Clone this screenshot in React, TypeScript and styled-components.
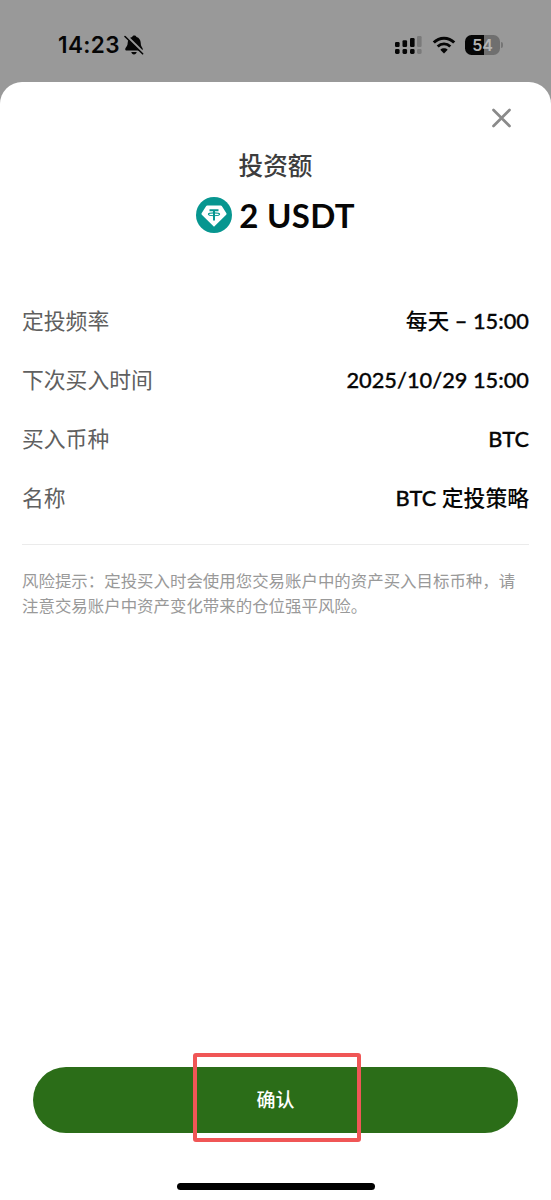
import React from "react";
import styled, { createGlobalStyle } from "styled-components";

const GlobalStyle = createGlobalStyle`
  * { box-sizing: border-box; }
  html, body { margin: 0; padding: 0; background: #999999; }
  body { font-family: Lato, "Noto Sans CJK SC", sans-serif; }
`;

const Screen = styled.div`
  width: 551px;
  height: 1200px;
  display: flex;
  flex-direction: column;
  background: #999999;
  overflow: hidden;
`;

const StatusBar = styled.header`
  height: 82px;
  flex: none;
  display: flex;
  align-items: flex-start;
  justify-content: space-between;
  padding: 31px 48px 0 58px;
`;

const StatusGroup = styled.div<{ $gap: number }>`
  display: flex;
  align-items: center;
  height: 28px;
  gap: ${(p) => p.$gap}px;
`;

const Clock = styled.span`
  font: 600 22.5px/28px Inter, sans-serif;
  letter-spacing: 0.4px;
  color: #060606;
  width: 61px;
  white-space: nowrap;
`;

const Battery = styled.div`
  display: flex;
  align-items: center;
  gap: 1px;
`;

const BatteryBody = styled.div`
  width: 35px;
  height: 20px;
  border-radius: 6.5px;
  background: linear-gradient(90deg, #060606 0 19px, #6f6f6f 19px);
  color: #b4b4b4;
  font: 600 16px/20px Inter, sans-serif;
  text-align: center;
`;

const BatteryTip = styled.div`
  width: 2px;
  height: 6px;
  border-radius: 0 2px 2px 0;
  background: #757575;
`;

const Sheet = styled.main`
  flex: 1;
  display: flex;
  flex-direction: column;
  background: #ffffff;
  border-radius: 22px 22px 0 0;
`;

const CloseRow = styled.div`
  display: flex;
  justify-content: flex-end;
  padding: 26px 39px 0 0;
  height: 65px;
`;

const CloseButton = styled.button`
  width: 21px;
  height: 21px;
  padding: 0;
  border: 0;
  background: none;
`;

const Title = styled.h1`
  margin: 0;
  text-align: center;
  font-size: 24.6px;
  line-height: 38px;
  font-weight: 500;
  color: #3d3d3d;
`;

const AmountRow = styled.div`
  display: flex;
  justify-content: center;
  align-items: center;
  gap: 7px;
  height: 40px;
  margin-top: 10px;
`;

const Amount = styled.span`
  font-size: 33px;
  line-height: 40px;
  font-weight: 700;
  letter-spacing: 0.3px;
  color: #060606;
  white-space: nowrap;
`;

const Details = styled.dl`
  margin: 56px 22px 0;
  padding-bottom: 17px;
  border-bottom: 1px solid #ebebeb;
`;

const DetailRow = styled.div`
  height: 59px;
  display: flex;
  justify-content: space-between;
  align-items: center;
`;

const Label = styled.dt`
  font-size: 21.8px;
  line-height: 32px;
  color: #606060;
`;

const Value = styled.dd`
  margin: 0;
  font-size: 21.8px;
  line-height: 32px;
  font-weight: 500;
  color: #060606;
`;

const Latin = styled.span`
  -webkit-text-stroke: 0.3px #060606;
`;

const RiskNote = styled.p`
  margin: 24px 22px 0;
  font-size: 16.45px;
  line-height: 25px;
  color: #999999;
  white-space: nowrap;
`;

const Footer = styled.footer`
  margin-top: auto;
  padding: 0 33px 10px;
  display: flex;
  flex-direction: column;
  align-items: center;
`;

const ConfirmButton = styled.button`
  position: relative;
  width: 485px;
  height: 66px;
  border: 0;
  border-radius: 33px;
  background: #2b6d18;
  color: #ffffff;
  font: 500 19px/28px Lato, "Noto Sans CJK SC", sans-serif;
`;

const Highlight = styled.span`
  position: absolute;
  left: 160px;
  top: -14px;
  width: 168px;
  height: 89px;
  border: 4.5px solid #f05656;
  border-radius: 3px;
`;

const HomeIndicator = styled.div`
  width: 198px;
  height: 7px;
  margin-top: 50px;
  border-radius: 4px;
  background: #000000;
`;

const MutedBell = () => (
  <svg width="20" height="20" viewBox="0 0 20 20">
    <path d="M10.300.6c1.200 0 2 .6 2.200 1.500 2.700.8 4.100 3 4.200 5.600.1 3 .9 4 1.700 5.200.9 1.400.3 2.700-1.300 2.700H2.900c-1.600 0-2.200-1.300-1.300-2.700.8-1.200 2-2.200 2.100-5.200.1-2.600 1.600-4.800 4.400-5.600C8.300 1.200 9.100.6 10.300.6zM7.300 17h5.400c-.3 1.600-1.300 2.400-2.700 2.400S7.600 18.600 7.300 17z" fill="#060606" />
    <path d="M2.400 1 19.400 17.700" stroke="#999999" strokeWidth="2.600" />
    <path d="M1 1.500 18.600 18.800" stroke="#060606" strokeWidth="1.600" strokeLinecap="round" />
  </svg>
);

const Signal = () => (
  <svg width="29" height="20" viewBox="0 0 29 20">
    <g fill="#060606">
      <rect x="1" y="7" width="4.600" height="5" rx="1.200" />
      <rect x="8.500" y="5.300" width="4.600" height="6.700" rx="1.200" />
      <rect x="16" y="3" width="4.600" height="9" rx="1.200" />
      <rect x="1" y="14" width="4.600" height="5" rx="1.400" />
      <rect x="8.500" y="14" width="4.600" height="5" rx="1.400" />
      <rect x="16" y="14" width="4.600" height="5" rx="1.400" />
    </g>
    <g fill="#7a7a7a">
      <rect x="23" y="1" width="4.600" height="11" rx="1.200" />
      <rect x="23" y="14" width="4.600" height="5" rx="1.400" />
    </g>
  </svg>
);

const Wifi = () => (
  <svg width="24" height="18" viewBox="0 0 24 18" fill="none" stroke="#060606">
    <path d="M1.800 6.500C7.500.7 16.500.7 22.200 6.500" strokeWidth="3" />
    <path d="M5.700 10.500c3.600-3.500 9-3.500 12.600 0" strokeWidth="2.900" />
    <path d="M12 17.400 8.300 13.700c2.100-1.900 5.300-1.900 7.400 0z" fill="#060606" stroke="none" />
  </svg>
);

const TetherLogo = () => (
  <svg width="36" height="36" viewBox="0 0 36 36">
    <circle cx="18" cy="18" r="18" fill="#079690" />
    <path d="M11.300 8.500h13.400c.5 0 .9.200 1.100.6l4.600 7.200c.3.500.2 1-.2 1.400L18 29.800 5.800 17.700c-.4-.4-.5-.9-.2-1.400l4.600-7.200c.2-.4.6-.6 1.100-.6z" fill="#ffffff" />
    <path d="M13.500 13.200h9M18 13.200v10.300" stroke="#079690" strokeWidth="2" fill="none" />
    <ellipse cx="18" cy="17.300" rx="5.600" ry="1.400" stroke="#079690" strokeWidth="1.100" fill="none" />
  </svg>
);

const details: { label: string; value: React.ReactNode }[] = [
  { label: "定投频率", value: <>每天<Latin> – 15:00</Latin></> },
  { label: "下次买入时间", value: <Latin>2025/10/29 15:00</Latin> },
  { label: "买入币种", value: <Latin>BTC</Latin> },
  { label: "名称", value: <><Latin>BTC </Latin>定投策略</> },
];

export default function App() {
  return (
    <Screen>
      <GlobalStyle />
      <StatusBar>
        <StatusGroup $gap={5}>
          <Clock>14:23</Clock>
          <MutedBell />
        </StatusGroup>
        <StatusGroup $gap={9}>
          <Signal />
          <Wifi />
          <Battery>
            <BatteryBody>54</BatteryBody>
            <BatteryTip />
          </Battery>
        </StatusGroup>
      </StatusBar>
      <Sheet>
        <CloseRow>
          <CloseButton aria-label="关闭">
            <svg width="21" height="21" viewBox="0 0 21 21">
              <path d="M2.500 2l16 16M18.500 2l-16 16" stroke="#8a8a8a" strokeWidth="2.700" strokeLinecap="round" />
            </svg>
          </CloseButton>
        </CloseRow>
        <Title>投资额</Title>
        <AmountRow>
          <TetherLogo />
          <Amount>2 USDT</Amount>
        </AmountRow>
        <Details>
          {details.map((d) => (
            <DetailRow key={d.label}>
              <Label>{d.label}</Label>
              <Value>{d.value}</Value>
            </DetailRow>
          ))}
        </Details>
        <RiskNote>
          风险提示：定投买入时会使用您交易账户中的资产买入目标币种，请
          <br />
          注意交易账户中资产变化带来的仓位强平风险。
        </RiskNote>
        <Footer>
          <ConfirmButton>
            确认
            <Highlight />
          </ConfirmButton>
          <HomeIndicator />
        </Footer>
      </Sheet>
    </Screen>
  );
}
